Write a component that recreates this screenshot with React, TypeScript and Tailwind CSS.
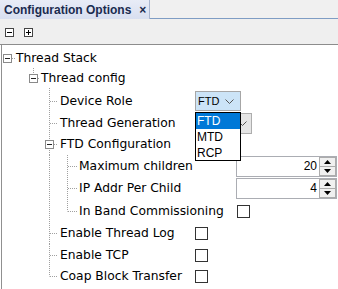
import React from "react";

const DOT = "#a0a0a0";
const TREE_FONT = "font-['DejaVu_Sans',sans-serif] text-[12.3px] text-black";
const CTRL_FONT = "font-['Liberation_Sans',Arial,sans-serif] text-[12px] text-black";

type Seg = [number, number, number, number];

function Gutter({
  w,
  h,
  segs,
  box,
}: {
  w: number;
  h: number;
  segs: Seg[];
  box?: [number, number];
}) {
  return (
    <svg width={w} height={h} viewBox={`2 0 ${w} ${h}`} className="block shrink-0">
      {segs.map(([x1, y1, x2, y2], i) => (
        <line
          key={i}
          x1={x1}
          y1={y1}
          x2={x2}
          y2={y2}
          stroke={DOT}
          strokeDasharray="1 1"
        />
      ))}
      {box && (
        <g>
          <rect x={box[0] + 0.5} y={box[1] + 0.5} width={8} height={8} fill="#fff" stroke="#8a8a8a" />
          <line x1={box[0] + 2} y1={box[1] + 4.5} x2={box[0] + 7} y2={box[1] + 4.5} stroke="#222" />
        </g>
      )}
    </svg>
  );
}

type Kind = "root" | "l1" | "l2" | "l2box" | "l3";

function Row({
  kind,
  h,
  pt = 0,
  last = false,
  label,
  children,
}: {
  kind: Kind;
  h: number;
  pt?: number;
  last?: boolean;
  label: string;
  children?: React.ReactNode;
}) {
  const cy = Math.floor(pt + (h - pt) / 2) + 0.5;
  let w = 14;
  let segs: Seg[] = [];
  let box: [number, number] | undefined;
  let lw = "";

  if (kind === "root") {
    w = 14;
    box = [3, cy - 4.5];
    segs = [[12, cy, 15, cy]];
  } else if (kind === "l1") {
    w = 39;
    box = [29, cy - 4.5];
    segs = [
      [33.5, 0, 33.5, cy - 4.5],
      [38, cy, 40, cy],
      [49.5, cy + 5, 49.5, h],
    ];
  } else if (kind === "l2") {
    w = 58;
    lw = "w-[135px]";
    segs = [
      [49.5, 0, 49.5, last ? cy : h],
      [50, cy, 58, cy],
    ];
  } else if (kind === "l2box") {
    w = 58;
    lw = "w-[135px]";
    box = [45, cy - 4.5];
    segs = [
      [49.5, 0, 49.5, h],
      [54, cy, 58, cy],
      [67.5, cy + 6, 67.5, h],
    ];
  } else {
    w = 77;
    lw = "w-[157px]";
    segs = [
      [49.5, 0, 49.5, h],
      [67.5, 0, 67.5, last ? cy : h],
      [68, cy, 77, cy],
    ];
  }

  return (
    <div className="flex">
      <Gutter w={w} h={h} segs={segs} box={box} />
      <div className="flex items-center" style={{ paddingTop: pt }}>
        <span className={`${lw} whitespace-nowrap ${TREE_FONT}`}>{label}</span>
        {children}
      </div>
    </div>
  );
}

function Chevron() {
  return (
    <svg width="9" height="5" viewBox="0 0 9 5" className="block">
      <polyline points="0.5,0.5 4.5,4.5 8.5,0.5" fill="none" stroke="#555" />
    </svg>
  );
}

function Check() {
  return <div className="h-[13px] w-[13px] border border-[#333] bg-white" />;
}

function Spinner({ value }: { value: number }) {
  return (
    <div className="flex h-[21px] w-[101px] border border-[#abadb3] bg-white">
      <div className={`flex flex-1 items-center justify-end pr-[2px] ${CTRL_FONT}`}>{value}</div>
      <div className="flex w-[17px] flex-col">
        <div className="flex flex-1 items-center justify-center border border-[#acacac] bg-[#f0f0f0]">
          <svg width="7" height="4" viewBox="0 0 7 4" className="block">
            <polygon points="0,4 7,4 3.5,0" fill="#000" />
          </svg>
        </div>
        <div className="flex flex-1 items-center justify-center border border-t-0 border-[#acacac] bg-[#f0f0f0]">
          <svg width="7" height="4" viewBox="0 0 7 4" className="block">
            <polygon points="0,0 7,0 3.5,4" fill="#000" />
          </svg>
        </div>
      </div>
    </div>
  );
}

function ToolBox({ plus }: { plus?: boolean }) {
  return (
    <svg width="9" height="9" viewBox="0 0 9 9" className="block">
      <rect x="0.5" y="0.5" width="8" height="8" fill="#fff" stroke="#444" />
      <line x1="2" y1="4.5" x2="7" y2="4.5" stroke="#000" />
      {plus && <line x1="4.5" y1="2" x2="4.5" y2="7" stroke="#000" />}
    </svg>
  );
}

export default function App() {
  return (
    <div className="h-[289px] w-[338px] overflow-hidden bg-white">
      {/* tab strip */}
      <div className="flex h-[19px] bg-[#f0f0f0]">
        <div className="flex w-[150px] items-center border-r border-[#a9b6d0] bg-gradient-to-b from-[#e8ecf7] to-[#d8dff0] pl-[4px]">
          <span className="whitespace-nowrap font-['Liberation_Sans',Arial,sans-serif] text-[12px] font-bold text-[#1b2b4f]">
            Configuration Options
          </span>
          <span className="ml-[8px] font-['Liberation_Sans',Arial,sans-serif] text-[12px] font-bold text-[#1b2b4f]">
            ×
          </span>
        </div>
        <div className="flex-1 border-b border-[#7f9dc4]" />
      </div>

      {/* toolbar */}
      <div className="flex h-[26px] items-center gap-[10px] border-b border-[#8c8c8c] bg-[#efefef] pl-[5px] pt-px">
        <ToolBox />
        <ToolBox plus />
      </div>

      {/* tree */}
      <div className="ml-px h-[250px] border-l border-[#909090] bg-white pt-[3px]">
        <Row kind="root" h={20} label="Thread Stack" />
        <Row kind="l1" h={20} label="Thread config" />
        <Row kind="l2" h={24} pt={2} label="Device Role">
          <div className="relative">
            <div className="flex h-[20px] w-[46px] items-center justify-between border border-[#a6a6a6] bg-[#cce4f7] pl-[2px] pr-[6px] font-['Liberation_Sans',Arial,sans-serif] text-[11px] text-black">
              FTD
              <Chevron />
            </div>
            <div className={`absolute left-0 top-[21px] z-10 w-[46px] border border-black bg-white ${CTRL_FONT}`}>
              <div className="flex h-[16px] items-center bg-[#0078d7] pl-px text-white">FTD</div>
              <div className="flex h-[16px] items-center pl-px">MTD</div>
              <div className="flex h-[15px] items-center pl-px">RCP</div>
            </div>
          </div>
        </Row>
        <Row kind="l2" h={22} label="Thread Generation">
          <div className="flex h-[21px] w-[57px] items-center justify-end border border-[#adadad] bg-[#e5e5e5] pr-[4px]">
            <Chevron />
          </div>
        </Row>
        <Row kind="l2box" h={21} label="FTD Configuration" />
        <Row kind="l3" h={22} label="Maximum children">
          <Spinner value={20} />
        </Row>
        <Row kind="l3" h={22} label="IP Addr Per Child">
          <Spinner value={4} />
        </Row>
        <Row kind="l3" h={24} last label="In Band Commissioning">
          <div className="pl-px">
            <Check />
          </div>
        </Row>
        <Row kind="l2" h={21} label="Enable Thread Log">
          <Check />
        </Row>
        <Row kind="l2" h={22} label="Enable TCP">
          <Check />
        </Row>
        <Row kind="l2" h={21} last label="Coap Block Transfer">
          <Check />
        </Row>
      </div>
    </div>
  );
}
